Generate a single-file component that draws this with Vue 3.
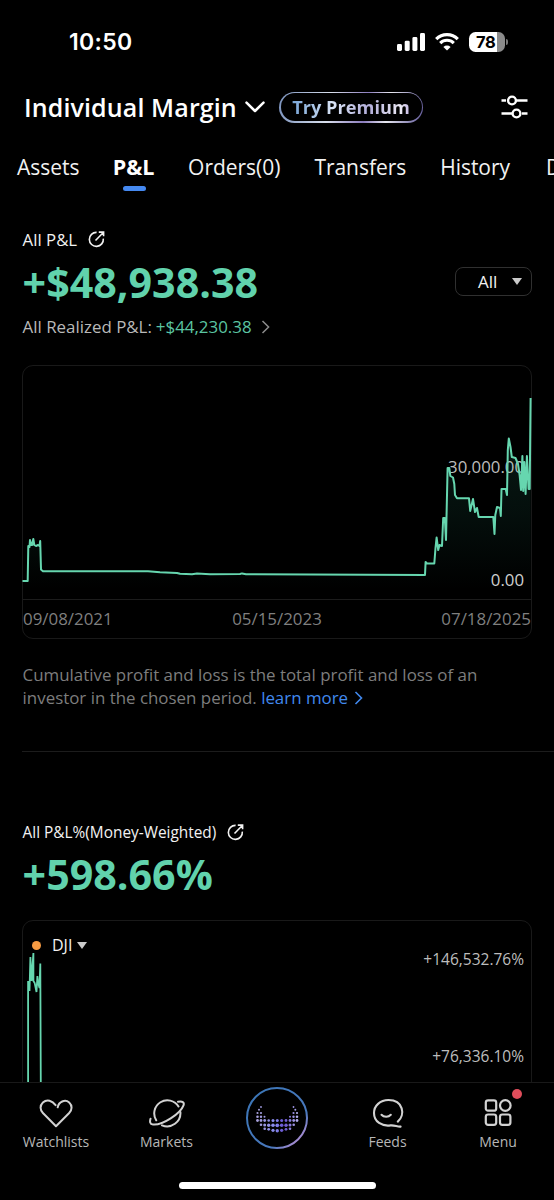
<script setup>
const tabs = [
  { label: 'Assets', width: 62.5 },
  { label: 'P&L', width: 42 },
  { label: 'Orders(0)', width: 93 },
  { label: 'Transfers', width: 92.5 },
  { label: 'History', width: 72.5 },
  { label: 'Documents', width: 110 },
].map((t) => ({ ...t, active: t.label === 'P&L' }))

const pnlLine =
  '22.5,581 27.7,581 28.3,546 29.5,547 30,540 31.2,545 32.2,545 33.3,539 34.3,545 36,546 38,545 39.5,546 40.2,541 41,569.5 43,571.3 148,571.3 160,572.2 177,573 180,573.8 192,574.3 197,573.6 210,574.2 240,574 242,573.4 246,574.3 425,575 425.6,562 427,563.5 434.3,563.5 435.5,548 436.6,537.5 438.2,550 439.5,545 442,546 443.2,518 444.8,518 446,540 447.6,468 449.3,468 450.3,476 453,477.5 454.3,484 455,495 457,498.3 469,498.3 470.2,511 473,499 475,512 477,508 478.7,517 493.3,517 494.5,534 495.3,515 497,507 500,508 500.8,516 501.5,489 505.7,489 507,495 507.8,450 508.8,438.5 510.5,447 511.8,457 515.5,458 518,464 519.6,475 521,490 522.4,456 523.2,491 524.3,462 525.6,494 526.9,456 528.6,489 529.7,489 530.6,398'

const dots = [
  [41, 37, 0.9], [73.5, 37, 0.9], [39, 39.8, 1], [75.3, 39.8, 1],
  [37.5, 43, 1.1], [41, 43, 1.1], [73.5, 43, 1.1], [77, 43, 1.1],
  [37.5, 46.7, 1.3], [41, 46.7, 1.2], [44.5, 46.7, 1], [70, 46.7, 1], [73.5, 46.7, 1.2], [77, 46.7, 1.3],
  [37.5, 50.5, 1.4], [41, 50.5, 1.4], [44.7, 50.5, 1.4], [48.7, 50.5, 1.3], [53, 50.5, 1.5], [57.3, 50.5, 1.5], [61.7, 50.5, 1.5], [66, 50.5, 1.4], [70, 50.5, 1.4], [73.7, 50.5, 1.4], [77, 50.5, 1.4],
  [41, 54.8, 1.3], [44.7, 55, 1.5], [48.7, 55.3, 1.7], [53, 55.3, 1.8], [57.3, 55.3, 1.9], [61.7, 55.3, 1.8], [66, 55.3, 1.7], [70, 55, 1.5], [73.7, 54.8, 1.3],
  [44.7, 58.8, 1.3], [48.7, 59.3, 1.4], [53, 60.3, 1.6], [57.3, 60.8, 1.7], [61.7, 60.3, 1.6], [66, 59.3, 1.4], [70, 58.8, 1.3],
]
</script>

<template>
  <div class="screen">
    <div class="status">
      <span class="time">10:50</span>
      <div class="status-icons">
        <svg width="28" height="18" viewBox="0 0 28 18" fill="#fff">
          <rect x="0" y="11" width="5" height="7" rx="1.4" />
          <rect x="7.7" y="7.7" width="5" height="10.3" rx="1.4" />
          <rect x="15.4" y="4" width="5" height="14" rx="1.4" />
          <rect x="23" y="0" width="5" height="18" rx="1.4" />
        </svg>
        <svg class="wifi" width="24" height="18" viewBox="0 0 24 18" fill="none" stroke="#fff">
          <path d="M1.2 6.1A15.3 15.3 0 0 1 22.8 6.1" stroke-width="3.2" />
          <path d="M5.2 10.1A9.7 9.7 0 0 1 18.8 10.1" stroke-width="3.1" />
          <path d="M12 17.6L8.4 13.9A5.2 5.2 0 0 1 15.6 13.9Z" fill="#fff" stroke="none" />
        </svg>
        <div class="battery"><span>78</span></div>
        <i class="battery-cap"></i>
      </div>
    </div>

    <header class="header">
      <h1>Individual Margin</h1>
      <svg class="caret" width="20" height="12" viewBox="0 0 20 12" fill="none" stroke="#fff" stroke-width="2.5" stroke-linecap="round" stroke-linejoin="round">
        <path d="M1.5 1.7L10 10L18.5 1.7" />
      </svg>
      <div class="premium"><span>Try Premium</span></div>
      <svg class="filters" width="28" height="24" viewBox="0 0 28 24" fill="none" stroke="#fff" stroke-width="2.4">
        <path d="M1.500 5.500H6M16 5.500H27.500M1.500 18.500H12.500M22 18.500H27.500" />
        <circle cx="12" cy="5.500" r="3.900" />
        <circle cx="16.500" cy="18.500" r="3.900" />
      </svg>
    </header>

    <nav class="tabs">
      <div v-for="t in tabs" :key="t.label" class="tab" :class="{ active: t.active }" :style="{ width: t.width + 'px' }">{{ t.label }}</div>
    </nav>

    <main class="content">
      <div class="label">
        <span>All P&amp;L</span>
        <svg width="17" height="17" viewBox="0 0 17 17" fill="none" stroke="#f2f2f2" stroke-width="1.6">
          <path d="M8.600 1.400A7 7 0 1 0 15.300 7.600M7.500 9.500L15.300 1.500M10.800 1.100H15.600V5.300" />
        </svg>
      </div>
      <div class="amount-row">
        <div class="amount">+$48,938.38</div>
        <div class="select"><span>All</span><i class="tri"></i></div>
      </div>
      <div class="realized">
        <span>All Realized P&amp;L:</span><span class="green">+$44,230.38</span>
        <svg width="9" height="14" viewBox="0 0 9 14" fill="none" stroke="#8c8c8c" stroke-width="1.5"><path d="M1.500 1L7.600 7L1.500 13" /></svg>
      </div>

      <section class="card">
        <div class="plot">
          <span class="tick high">30,000.00</span>
          <span class="tick zero">0.00</span>
        </div>
        <div class="dates"><span>09/08/2021</span><span>05/15/2023</span><span>07/18/2025</span></div>
        <svg class="series" width="510" height="274" viewBox="22 365 510 274">
          <defs>
            <linearGradient id="pnlFill" gradientUnits="userSpaceOnUse" x1="0" y1="398" x2="0" y2="590">
              <stop offset="0" stop-color="#3fd4ae" stop-opacity=".13" />
              <stop offset=".6" stop-color="#3fd4ae" stop-opacity=".07" />
              <stop offset="1" stop-color="#3fd4ae" stop-opacity="0" />
            </linearGradient>
          </defs>
          <polygon :points="pnlLine + ' 530.6,599 22.5,599'" fill="url(#pnlFill)" />
          <polyline :points="pnlLine" fill="none" stroke="#66d6af" stroke-width="2" stroke-linejoin="round" />
        </svg>
      </section>

      <p class="note">
        <span>Cumulative profit and loss is the total profit and loss of an</span><br />
        <span>investor in the chosen period.</span> <a>learn more</a>
        <svg width="9" height="14" viewBox="0 0 9 14" fill="none" stroke="#4189ee" stroke-width="1.6"><path d="M1.500 1L7.500 7L1.500 13" /></svg>
      </p>

      <div class="rule"></div>

      <div class="label second">
        <span>All P&amp;L%(Money-Weighted)</span>
        <svg width="17" height="17" viewBox="0 0 17 17" fill="none" stroke="#f2f2f2" stroke-width="1.6">
          <path d="M8.600 1.400A7 7 0 1 0 15.300 7.600M7.500 9.500L15.300 1.500M10.800 1.100H15.600V5.300" />
        </svg>
      </div>
      <div class="amount percent">+598.66%</div>

      <section class="card compare">
        <div class="legend"><i class="dot"></i><span>DJI</span><i class="tri"></i></div>
        <span class="tick p1">+146,532.76%</span>
        <span class="tick p2">+76,336.10%</span>
        <svg class="series" width="510" height="164" viewBox="22 920 510 164">
          <path d="M28.100 1084V982H29.500V991L30.400 957L31.500 981L33.400 953V981L34.700 983L36.500 992L37.400 976L38.200 983L39.500 988L40.300 963.500L40.800 1084" fill="none" stroke="#66d6af" stroke-width="1.800" />
        </svg>
      </section>
    </main>

    <footer class="bottom">
      <div class="items">
        <div class="item">
          <svg width="34" height="30" viewBox="0 0 34 30" fill="none" stroke="#d2d2d2" stroke-width="2" stroke-linecap="round" stroke-linejoin="round">
            <path d="M18.700 9.300C19.600 4 26 .8 30.200 4.500C33.600 7.600 33.100 12.100 30.200 15L17 28.200L3.900 15C1 12.100.6 7.600 3.900 4.500C8 .8 13.300 2.600 16.600 7.200" />
          </svg>
          <span>Watchlists</span>
        </div>
        <div class="item">
          <svg width="36" height="30" viewBox="0 0 36 30" fill="none" stroke="#d2d2d2" stroke-width="2" stroke-linecap="round">
            <path d="M7.200 22.300A13.100 13.100 0 0 1 29.500 8.500M31.400 14A13.300 13.300 0 0 1 13 27.300" />
            <path d="M29 3.800C33.500 2.900 35.600 4.300 34.500 7.300C31.500 15.500 13.500 27.500 4 26.500C.7 26.100.7 23.400 1.500 20.700" />
          </svg>
          <span>Markets</span>
        </div>
        <div class="item logo">
          <svg width="114" height="84" viewBox="0 0 114 84">
            <defs>
              <linearGradient id="ring" x1="0" y1="0" x2="1" y2="1">
                <stop offset="0" stop-color="#3975b5" /><stop offset=".7" stop-color="#4978bd" /><stop offset=".86" stop-color="#a38bd0" /><stop offset="1" stop-color="#5960ba" />
              </linearGradient>
              <linearGradient id="smile" x1="37" x2="78" y1="0" y2="0" gradientUnits="userSpaceOnUse">
                <stop offset="0" stop-color="#a9a1dc" /><stop offset=".45" stop-color="#8589ed" /><stop offset=".65" stop-color="#6651cf" /><stop offset="1" stop-color="#b4b0ed" />
              </linearGradient>
            </defs>
            <circle cx="57" cy="48" r="30" fill="none" stroke="url(#ring)" stroke-width="2" />
            <circle v-for="(d, i) in dots" :key="i" :cx="d[0]" :cy="d[1]" :r="d[2]" fill="url(#smile)" />
          </svg>
        </div>
        <div class="item">
          <svg width="32" height="30" viewBox="0 0 32 30" fill="none" stroke="#d2d2d2" stroke-width="2.100" stroke-linecap="round" stroke-linejoin="round">
            <path d="M25.800 23.600C33.500 17 31.500 2 16.500 2C8 2 2 8 2 15C2 24 10 28.500 18.500 27.400C22.500 26.900 25.500 29 28.600 28.600" />
            <path d="M9.500 16.800C11.800 19.300 16.500 19.300 18.800 16.800" />
          </svg>
          <span>Feeds</span>
        </div>
        <div class="item menu">
          <svg width="28" height="30" viewBox="0 0 28 30" fill="none" stroke="#d2d2d2" stroke-width="2.200">
            <rect x="1.800" y="2.300" width="10.400" height="10.400" rx="2.300" />
            <circle cx="21.300" cy="7.500" r="5.300" />
            <rect x="1.800" y="16.500" width="10.400" height="10.400" rx="2.300" />
            <rect x="16" y="16.500" width="10.400" height="10.400" rx="2.300" />
          </svg>
          <span>Menu</span>
          <i class="badge"></i>
        </div>
      </div>
      <div class="home"></div>
    </footer>
  </div>
</template>

<style>
html, body { margin: 0; background: #000; }
</style>

<style scoped>
* { box-sizing: border-box; }
.screen { width: 554px; height: 1200px; background: #000; color: #f2f2f2; display: flex; flex-direction: column; overflow: hidden; font-family: "Open Sans", "Noto Sans", sans-serif; white-space: nowrap; }
svg { display: block; flex: none; }
.status { height: 82px; flex: none; display: flex; justify-content: space-between; padding: 1px 46px 0 69px; align-items: center; }
.time { font: 600 23px/30px Inter, sans-serif; color: #fff; letter-spacing: .3px; }
.status-icons { display: flex; align-items: center; }
.wifi { margin-left: 10px; }
.battery { margin-left: 10px; width: 36px; height: 20px; border-radius: 6.500px; background: linear-gradient(90deg, #fff 28px, #8b8b8b 28px); color: #000; font: 700 16.500px/20px Inter, sans-serif; padding-left: 7px; letter-spacing: -.4px; }
.battery-cap { width: 2px; height: 6px; margin-left: 1px; border-radius: 0 2px 2px 0; background: #777; }
.header { height: 50px; flex: none; display: flex; align-items: center; padding: 0 26px 0 24px; }
h1 { margin: 0; font-size: 25px; line-height: 34px; font-weight: 600; color: #fff; width: 213px; letter-spacing: .12px; }
.caret { margin-left: 8px; }
.premium { margin-left: 14px; width: 144px; height: 31px; border-radius: 16px; padding: 1.500px; background: linear-gradient(100deg, #7991bd, #d9dfec 35%, #8b7cbd 60%, #e8e8f0 75%, #5f5799); }
.premium span { display: block; height: 28px; border-radius: 15px; text-align: center; font-size: 18.200px; line-height: 28px; font-weight: 700; color: transparent; background: linear-gradient(90deg, #79a6d8 12px, #d9e4f6 52px, #b2add9 88px, #eceaf5 120px, #b3a3de 132px) text, #000; }
.filters { margin-left: auto; }
.tabs { height: 69px; flex: none; display: flex; gap: 33.300px; padding-left: 17px; font-size: 21px; line-height: 71px; }
.tab { flex: none; position: relative; letter-spacing: -.03px; }
.tab.active { font-weight: 700; color: #fff; font-size: 21.500px; line-height: 70px; }
.tab.active::after { content: ""; position: absolute; left: 10px; top: 54px; width: 23px; height: 5px; border-radius: 2.500px; background: #4589f0; }
.content { flex: 1; min-height: 0; overflow: hidden; padding: 23px 22px 0; }
.label { display: flex; align-items: center; gap: 11px; height: 30px; font-size: 16.800px; padding-left: .6px; }
.amount-row { display: flex; justify-content: space-between; height: 57px; }
.amount { font-size: 41.200px; line-height: 56px; font-weight: 700; color: #61d2ac; padding-left: .6px; }
.select { display: flex; align-items: center; width: 77px; height: 29px; margin: 13px 0 0; border: 1.500px solid #303030; border-radius: 8px; padding-left: 22px; font-size: 17px; }
.tri { border: solid transparent; border-width: 7px 5.500px 0; border-top-color: #cacaca; }
.select .tri { margin-left: 15px; }
.realized { display: flex; align-items: center; height: 32px; font-size: 16.900px; color: #b9b9b9; padding-left: .6px; }
.realized span { margin-top: -1px; }
.realized .green { color: #5bc5a2; margin-left: 4px; }
.realized svg { margin-left: 9px; }
.card { position: relative; width: 510px; height: 274px; margin-top: 22px; border: 1px solid #191919; border-radius: 11px; }
.plot { height: 234px; border-bottom: 1px solid #1c1c1c; position: relative; }
.tick { position: absolute; right: 7px; font-size: 16.800px; line-height: 22px; color: #bdbdbd; }
.high { top: 90px; } .zero { top: 203px; color: #d0d0d0; }
.series { position: absolute; left: -1px; top: -1px; }
.dates { display: flex; justify-content: space-between; color: #7f7f7f; font-size: 16.900px; line-height: 38px; }
.note { margin: 24px 0 0; font-size: 16.900px; line-height: 23px; color: #7d7d7d; padding-left: .6px; }
.note a { color: #4189ee; }
.note svg { display: inline-block; margin-left: 3px; position: relative; left: 3px; vertical-align: -1px; }
.rule { height: 1px; background: #1c1c1c; margin: 42px -22px 0 0; }
.second { margin-top: 65px; font-size: 15.400px; }
.percent { height: 57px; line-height: 55px; }
.compare { margin-top: 16px; }
.legend { display: flex; align-items: center; height: 22px; margin: 13px 0 0 9px; font-size: 16px; }
.legend .tri { margin-left: 5px; }
.dot { width: 9px; height: 9px; border-radius: 50%; background: #f79b43; margin-right: 11px; }
.compare .tick { font-size: 15.500px; }
.p1 { top: 27px; } .p2 { top: 124px; }
.bottom { height: 118px; flex: none; border-top: 1px solid #191919; position: relative; background: #000; }
.items { display: flex; height: 76px; justify-content: center; }
.item { width: 110.500px; position: relative; display: flex; flex-direction: column; align-items: center; padding-top: 15px; font-size: 14px; color: #b7b7b7; line-height: 20px; }
.item span { margin-top: 4px; }
.item.logo { padding: 0; margin-top: -13px; height: 90px; }
.badge { position: absolute; width: 10px; height: 10px; border-radius: 50%; background: #e04d5b; left: 69px; top: 6px; }
.home { width: 197px; height: 7px; border-radius: 4px; background: #fff; margin: 23px auto 0; }
</style>
